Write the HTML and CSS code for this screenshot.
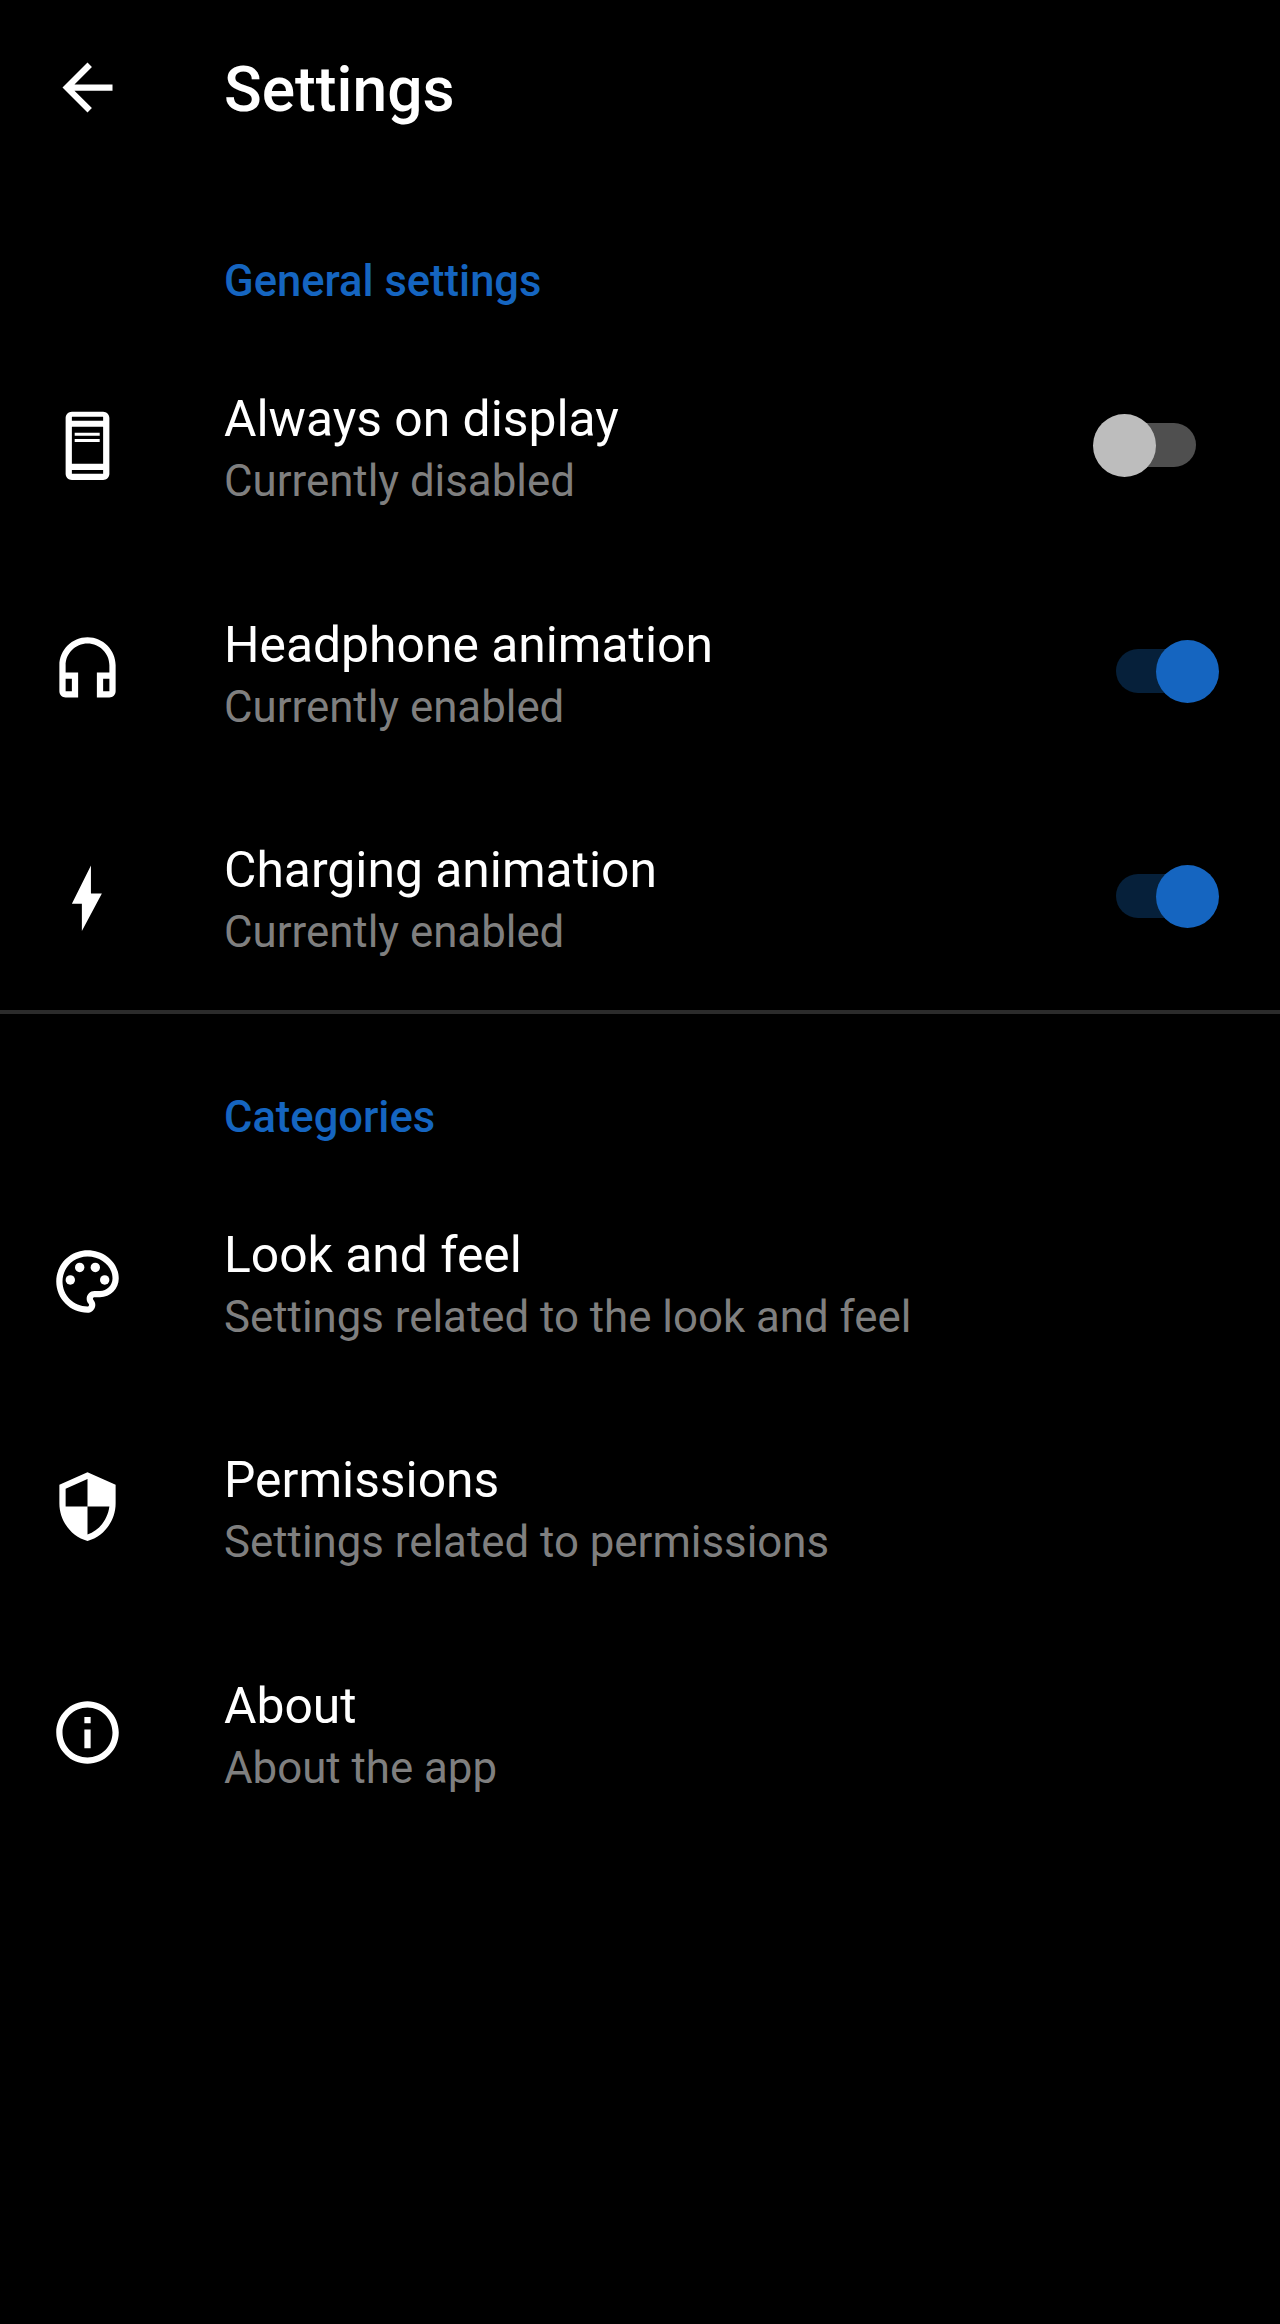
FILE: index.html
```html
<!DOCTYPE html>
<html lang="en">
<head>
    <meta charset="UTF-8">
    <meta name="viewport" content="width=device-width, initial-scale=1.0">
    <title>Settings</title>
    <link rel="stylesheet" href="styles.css">
</head>
<body>
    <div class="toolbar">
        <a class="icon-box">
            <svg class="icon" viewBox="0 0 24 24"><path d="M20 11H7.83l5.59-5.59L12 4l-8 8 8 8 1.41-1.41L7.83 13H20v-2z"/></svg>
        </a>
        <h1>Settings</h1>
    </div>

    <div class="section">
        <h2>General settings</h2>

        <div class="row">
            <div class="icon-box">
                <svg class="icon" viewBox="0 0 24 24"><path fill-rule="evenodd" d="M17 1.2H7c-1.1 0-2 .9-2 2V21c0 1.1.9 2 2 2h10c1.1 0 2-.9 2-2V3.2c0-1.1-.9-2-2-2zM7 2.8h10v1.3H7zM7 6h10v11.8H7zM7 19.8h10V21H7z"/><path d="M7.9 7.9h8v1h-8zM7.9 9.9h8v1h-8z"/></svg>
            </div>
            <div class="row-text">
                <div class="title">Always on display</div>
                <div class="subtitle">Currently disabled</div>
            </div>
            <div class="switch"><span class="track"></span><span class="thumb"></span></div>
        </div>

        <div class="row">
            <div class="icon-box">
                <svg class="icon" viewBox="0 0 24 24"><path d="M12 1c-4.97 0-9 4.03-9 9v8.3c0 1.1.9 2 2 2h4v-8H5V10c0-3.87 3.13-7 7-7s7 3.13 7 7v2.3h-4v8h4c1.1 0 2-.9 2-2V10c0-4.97-4.03-9-9-9zM7 14.3v4H5v-4h2zm12 4h-2v-4h2v4z"/></svg>
            </div>
            <div class="row-text">
                <div class="title">Headphone animation</div>
                <div class="subtitle">Currently enabled</div>
            </div>
            <div class="switch on"><span class="track"></span><span class="thumb"></span></div>
        </div>

        <div class="row">
            <div class="icon-box">
                <svg class="icon" viewBox="0 0 24 24"><path d="M13.1 2.1 7 14.3h3.2V23l6.4-12h-3.5z"/></svg>
            </div>
            <div class="row-text">
                <div class="title">Charging animation</div>
                <div class="subtitle">Currently enabled</div>
            </div>
            <div class="switch on"><span class="track"></span><span class="thumb"></span></div>
        </div>
    </div>

    <hr>

    <div class="section categories">
        <h2>Categories</h2>

        <div class="row">
            <div class="icon-box">
                <svg class="icon" viewBox="0 0 24 24"><path d="M12 22C6.49 22 2 17.51 2 12S6.49 2 12 2s10 4.04 10 9c0 3.31-2.69 6-6 6h-1.77c-.28 0-.5.22-.5.5 0 .12.05.23.13.33.41.47.64 1.06.64 1.67 0 1.38-1.12 2.5-2.5 2.5zm0-18c-4.41 0-8 3.59-8 8s3.59 8 8 8c.28 0 .5-.22.5-.5 0-.16-.08-.28-.14-.35-.41-.46-.63-1.05-.63-1.65 0-1.38 1.12-2.5 2.5-2.5H16c2.21 0 4-1.79 4-4 0-3.86-3.59-7-8-7z"/><circle cx="6.5" cy="11.5" r="1.5"/><circle cx="9.5" cy="7.5" r="1.5"/><circle cx="14.5" cy="7.5" r="1.5"/><circle cx="17.5" cy="11.5" r="1.5"/></svg>
            </div>
            <div class="row-text">
                <div class="title">Look and feel</div>
                <div class="subtitle">Settings related to the look and feel</div>
            </div>
        </div>

        <div class="row">
            <div class="icon-box">
                <svg class="icon" viewBox="0 0 24 24"><path d="M12 1 3 5v6c0 5.55 3.84 10.74 9 12 5.16-1.26 9-6.45 9-12V5l-9-4zm0 10.99h7c-.53 4.12-3.28 7.79-7 8.94V12H5V6.3l7-3.11v8.8z"/></svg>
            </div>
            <div class="row-text">
                <div class="title">Permissions</div>
                <div class="subtitle">Settings related to permissions</div>
            </div>
        </div>

        <div class="row">
            <div class="icon-box">
                <svg class="icon" viewBox="0 0 24 24"><path d="M11 7h2v2h-2zm0 4h2v6h-2zm1-9C6.48 2 2 6.48 2 12s4.48 10 10 10 10-4.48 10-10S17.52 2 12 2zm0 18c-4.41 0-8-3.59-8-8s3.59-8 8-8 8 3.59 8 8-3.59 8-8 8z"/></svg>
            </div>
            <div class="row-text">
                <div class="title">About</div>
                <div class="subtitle">About the app</div>
            </div>
        </div>
    </div>
</body>
</html>
```

FILE: styles.css
```css
body { margin: 0; background-color: #000; color: #fff; font-family: Roboto, "Noto Sans", sans-serif; }

.toolbar { display: flex; align-items: center; height: 174px; }
.toolbar h1 { margin: 0; padding-top: 5px; font-size: 62.3px; font-weight: 500; line-height: 72px; }

.icon-box { display: flex; justify-content: center; align-items: center; flex: none; width: 224px; padding-right: 50px; box-sizing: border-box; }
.icon { display: block; width: 75px; height: 75px; fill: #fff; }

.section h2 {
    margin: 0;
    height: 159px;
    padding-left: 224px;
    font-size: 43.5px;
    font-weight: 500;
    line-height: 215px;
    color: #1565c0;
}
.categories h2 { height: 155px; line-height: 207px; }

.row { display: flex; align-items: center; height: 225.5px; }
.row-text { flex: 1; padding-top: 10px; }
.title { font-size: 49.8px; line-height: 62px; }
.subtitle { font-size: 43.8px; line-height: 63px; color: #7f7f7f; }

.switch { position: relative; flex: none; width: 126px; height: 63px; margin-right: 61px; }
.track { position: absolute; top: 9px; left: 23px; width: 80px; height: 44px; border-radius: 22px; background: #4f4f4f; }
.thumb { position: absolute; top: 0; left: 0; width: 63px; height: 63px; border-radius: 50%; background: #bdbdbd; }
.switch.on .track { background: #06203a; }
.switch.on .thumb { left: 63px; background: #1565c0; }

hr { height: 4px; margin: 0; border: none; background: #2b2b2b; }
```
